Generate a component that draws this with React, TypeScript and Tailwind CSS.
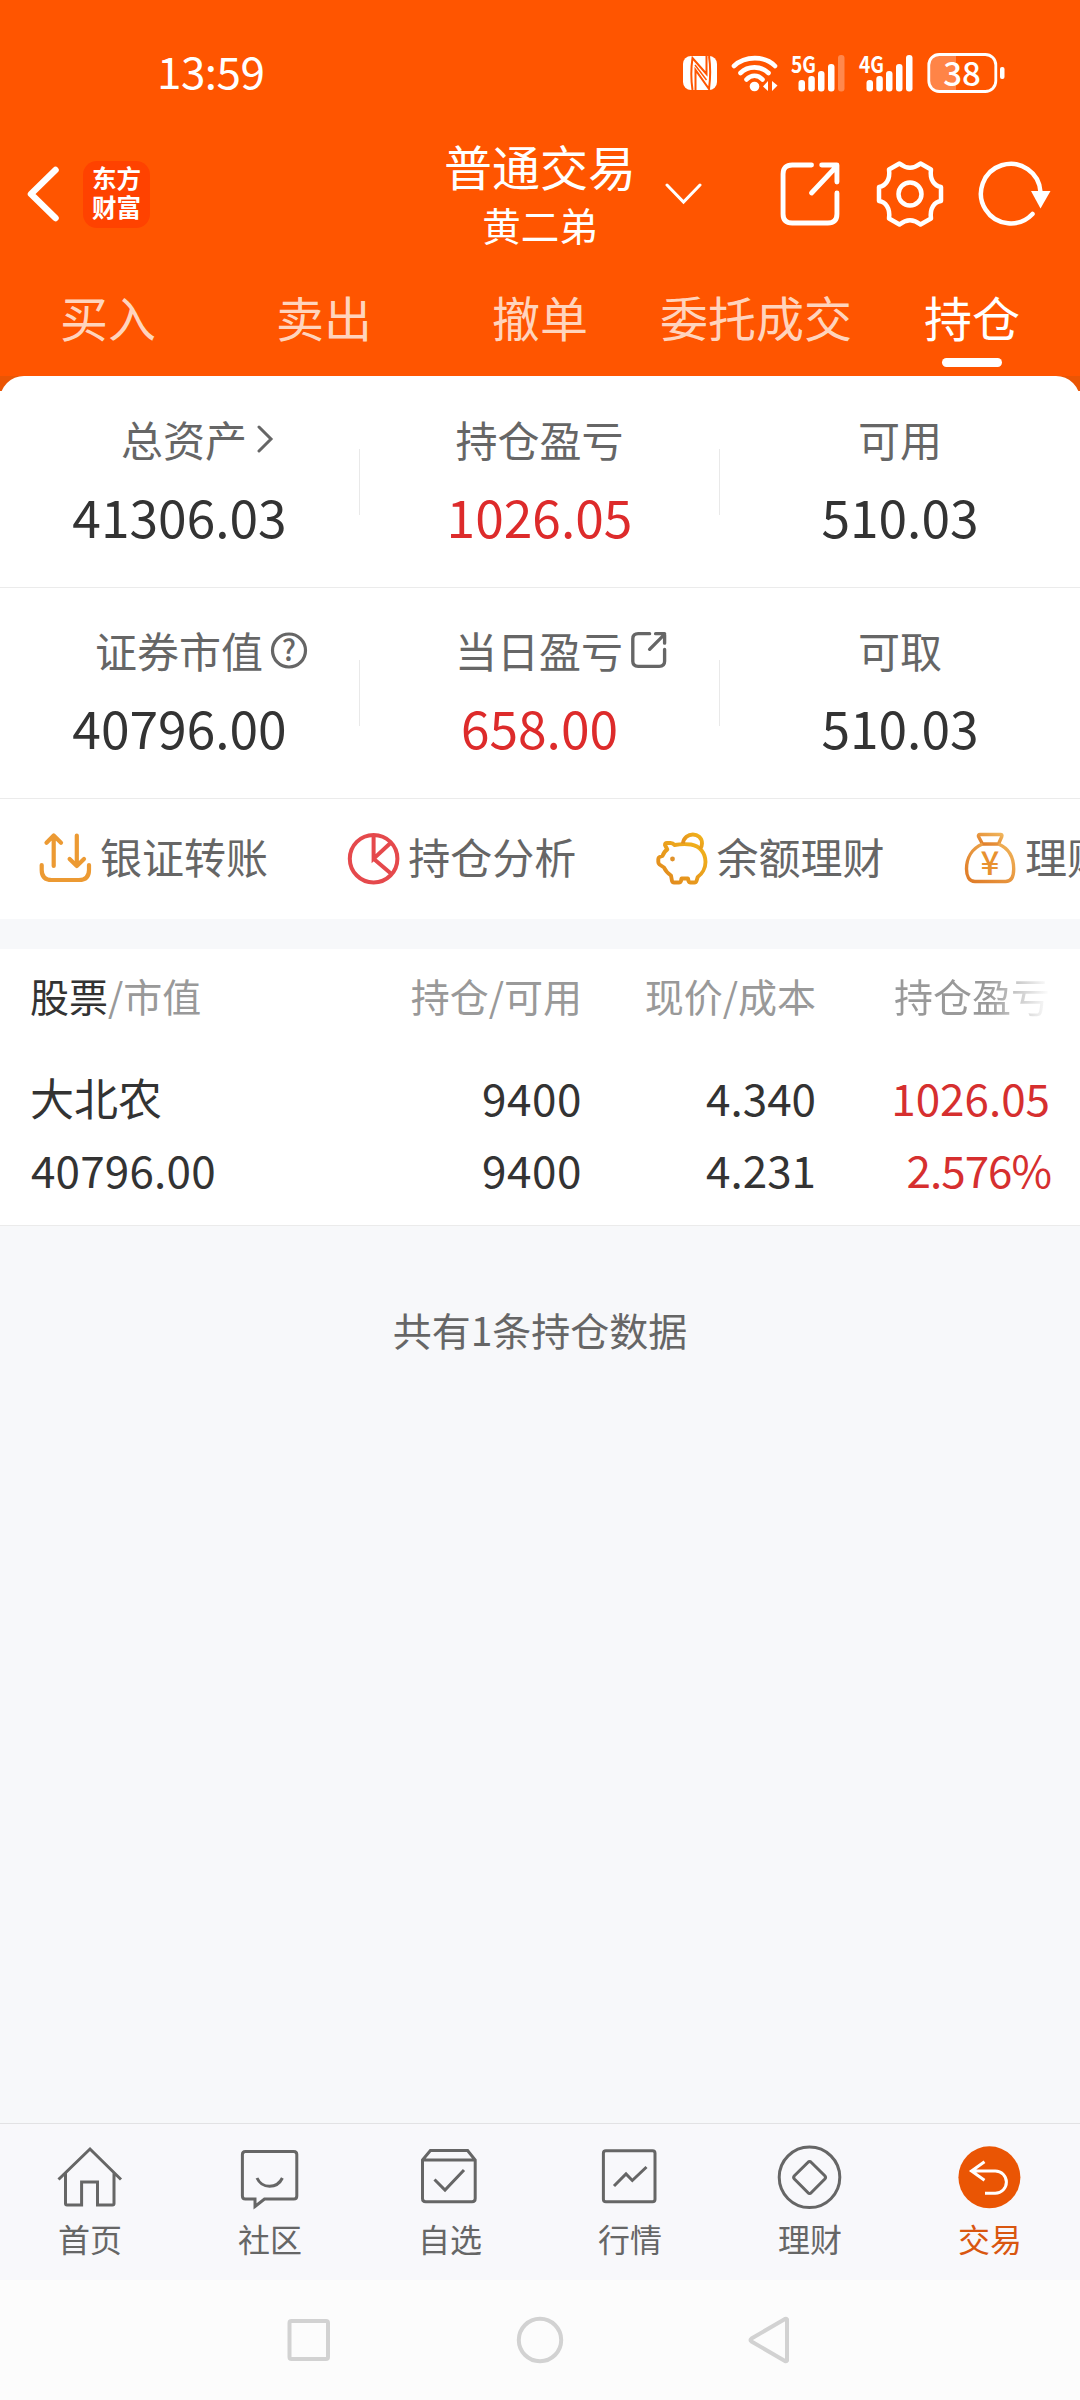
import React from "react";

const tabs = ["买入", "卖出", "撤单", "委托成交", "持仓"];

function NfcIcon() {
  return (
    <svg className="w-[34px] h-[34px] mt-[3px]" viewBox="0 0 34 34" fill="none">
      <rect width="34" height="34" rx="8" fill="#fff" />
      <g stroke="#ff5500" strokeWidth="2">
        <path d="M9.500 34C8 24 8 12 9.500 2L23.500 18V0" />
        <path d="M12.500 34V14L26 33C27.500 22 27.500 10 26 0" />
        <path d="M12 9L23.500 24" strokeWidth="1.400" />
      </g>
    </svg>
  );
}

function WifiIcon() {
  return (
    <svg className="w-[48px] h-[38px] ml-[14px] mt-[1px]" viewBox="0 0 48 38" fill="none">
      <g stroke="#fff" strokeWidth="4.6" strokeLinecap="round">
        <path d="M3 12C14 1.500 34 1.500 44 12" />
        <path d="M9.500 19C17 11.500 30 11.500 37.500 19" />
        <path d="M15.500 25.500C20 20.500 27 20.500 31.500 25.500" />
      </g>
      <circle cx="23.500" cy="32.500" r="4.800" fill="#fff" />
      <path d="M37 27v10l-5-4.500zM41 27v10l5.500-5.500z" fill="#fff" />
    </svg>
  );
}

function Signal({ label, weak }: { label: string; weak?: boolean }) {
  return (
    <svg className="w-[56px] h-[40px] overflow-visible" viewBox="0 0 56 40">
      <text
        x="0"
        y="20"
        fill="#fff"
        fontSize="23"
        fontWeight="700"
        textLength="25"
        lengthAdjust="spacingAndGlyphs"
      >
        {label}
      </text>
      <g fill="#fff">
        <rect x="7.500" y="27" width="6.500" height="11.500" rx="3" />
        <rect x="17.300" y="23" width="6.500" height="15.500" rx="3" />
        <rect x="27" y="18" width="6.500" height="20.500" rx="3" />
        <rect x="37" y="11" width="6.500" height="27.500" rx="3" />
        <rect x="47" y="2" width="6.500" height="36.500" rx="3" opacity={weak ? 0.3 : 1} />
      </g>
    </svg>
  );
}

function Battery() {
  return (
    <svg className="w-[80px] h-[40px] overflow-visible" viewBox="0 0 80 40" fill="none">
      <path d="M12 1.500H29V38.500H12Q2 38.500 2 28V12Q2 1.500 12 1.500Z" fill="#fff" opacity="0.28" />
      <rect x="1.800" y="1.500" width="67" height="37" rx="10.500" stroke="#fff" strokeWidth="2.800" />
      <rect x="73" y="14" width="4.500" height="12" rx="2" fill="#fff" />
      <text x="35" y="32.500" textAnchor="middle" fill="#fff" fontSize="33" fontWeight="500">
        38
      </text>
    </svg>
  );
}

function ShareIcon({ className, weight }: { className: string; weight: number }) {
  return (
    <svg
      className={className}
      viewBox="0 0 60 64"
      preserveAspectRatio="none"
      fill="none"
      stroke="currentColor"
      strokeWidth={weight}
      strokeLinecap="round"
      strokeLinejoin="round"
    >
      <path d="M31 3H12Q3 3 3 12V52Q3 61 12 61H47Q56 61 56 52V31" />
      <path d="M41 3H56V20M56 4L31 31" />
    </svg>
  );
}

function Header() {
  return (
    <header className="bg-[#ff5500] text-white">
      <div className="flex items-start h-[110px] pt-[53px]">
        <div className="w-[683px] pl-[157px] text-[44px] leading-[34px] tracking-[-0.5px]">13:59</div>
        <NfcIcon />
        <WifiIcon />
        <div className="ml-[12px]">
          <Signal label="5G" weak />
        </div>
        <div className="ml-[12px]">
          <Signal label="4G" />
        </div>
        <div className="ml-[12px]">
          <Battery />
        </div>
      </div>

      <div className="grid grid-cols-[444px_192px_444px] items-center h-[168px]">
        <div className="flex items-center pl-[24px]">
          <svg className="w-[38px] h-[60px]" viewBox="0 0 38 60" fill="none" stroke="#fff" strokeWidth="6.500" strokeLinecap="round" strokeLinejoin="round">
            <path d="M31.500 6L7 30L31.500 54" />
          </svg>
          <div className="ml-[21px] w-[67px] h-[67px] rounded-[14px] bg-[#ff4200] flex items-center justify-center pb-[4px]">
            <span className="w-[49px] text-[24.5px] leading-[29px] font-bold break-all">东方财富</span>
          </div>
        </div>
        <div className="flex flex-col items-center whitespace-nowrap">
          <span className="text-[48px] leading-[60px]">普通交易</span>
          <span className="text-[38.5px] leading-[58px]">黄二弟</span>
        </div>
        <div className="flex items-center pl-[29px]">
          <svg className="w-[37px] h-[22px]" viewBox="0 0 37 22" fill="none" stroke="#fff" strokeWidth="3" strokeLinecap="round">
            <path d="M2 2L18.500 19L35 2" />
          </svg>
          <ShareIcon className="w-[61px] h-[64px] ml-[78px]" weight={4.8} />
          <svg className="w-[68px] h-[68px] ml-[35px]" viewBox="-34 -34 68 68" fill="none" stroke="#fff" strokeWidth="4.500" strokeLinejoin="round">
            <path d="M-10.500 -30.500Q0 -22 10.500 -30.500L21 -24.500C19.500 -14 24.500 -8 31 -7V7C24.500 8 19.500 14 21 24.500L10.500 30.500Q0 22 -10.500 30.500L-21 24.500C-19.500 14 -24.500 8 -31 7V-7C-24.500 -8 -19.500 -14 -21 -24.500Z" />
            <circle r="11.500" />
          </svg>
          <svg className="w-[74px] h-[68px] ml-[33px]" viewBox="0 0 74 68" fill="none">
            <path d="M55.500 54A29.800 29.800 0 1 1 63.500 32" stroke="#fff" strokeWidth="4.500" strokeLinecap="round" />
            <path d="M54 31H73.500L63.500 48.500Z" fill="#fff" />
          </svg>
        </div>
      </div>

      <nav className="grid grid-cols-5 h-[98px] pt-[8px]">
        {tabs.map((tab) => (
          <div key={tab} className="flex flex-col items-center">
            <span
              className={
                tab === "持仓"
                  ? "text-[48px] leading-[60px] text-white"
                  : "text-[48px] leading-[60px] text-[#ffd4bd]"
              }
            >
              {tab}
            </span>
            {tab === "持仓" && <div className="mt-[12px] w-[60px] h-[9px] rounded-full bg-white" />}
          </div>
        ))}
      </nav>
    </header>
  );
}

interface StatProps {
  label: string;
  value: string;
  red?: boolean;
  last?: boolean;
  children?: React.ReactNode;
}

function Stat({ label, value, red, last, children }: StatProps) {
  return (
    <div className="flex">
      <div className="flex-1 flex flex-col items-center">
        <div className="flex items-center justify-center h-[56px] text-[42px] leading-[56px] text-[#666]">
          {label}
          {children}
        </div>
        <div className={`mt-[17px] h-[64px] text-[51.5px] leading-[64px] ${red ? "text-[#dd2b2b]" : "text-[#333]"}`}>
          {value}
        </div>
      </div>
      {!last && <div className="w-px h-[66px] mt-[38px] bg-[#e9e9e9]" />}
    </div>
  );
}

function Summary() {
  return (
    <section className="bg-[linear-gradient(#ea5504_15px,#fff_15px)]">
      <div className="bg-white rounded-t-[24px]">
        <div className="grid grid-cols-3 h-[212px] pt-[35px] border-b border-[#ebebeb]">
          <Stat label="总资产" value="41306.03">
            <svg className="w-[17px] h-[28px] ml-[10px] mr-[-36px]" viewBox="0 0 17 28" fill="none" stroke="#666" strokeWidth="3" strokeLinecap="round">
              <path d="M2 2L14 14L2 26" />
            </svg>
          </Stat>
          <Stat label="持仓盈亏" value="1026.05" red />
          <Stat label="可用" value="510.03" last />
        </div>
        <div className="grid grid-cols-3 h-[211px] pt-[34px] border-b border-[#ebebeb]">
          <Stat label="证券市值" value="40796.00">
            <svg className="w-[36px] h-[36px] ml-[8px] mr-[-43px] overflow-visible" viewBox="0 0 36 36" fill="none">
              <circle cx="18" cy="18.500" r="16.500" stroke="#666" strokeWidth="3.200" />
              <text x="18" y="29" textAnchor="middle" fontSize="29" fontWeight="500" fill="#666">
                ?
              </text>
            </svg>
          </Stat>
          <Stat label="当日盈亏" value="658.00" red>
            <ShareIcon className="w-[36px] h-[36px] ml-[8px] mr-[-43px]" weight={5.6} />
          </Stat>
          <Stat label="可取" value="510.03" last />
        </div>
      </div>
    </section>
  );
}

function TransferIcon() {
  return (
    <svg className="w-[53px] h-[53px]" viewBox="0 0 53 53" fill="none" stroke="#ec9a33" strokeWidth="4.200" strokeLinecap="round" strokeLinejoin="round">
      <path d="M2.700 33V38Q2.700 48 12.700 48H40Q50 48 50 38V33" />
      <path d="M14.700 34V3.500M7.500 10.700L14.700 3.500L22 10.700" />
      <path d="M37.800 3.500V34M30.600 27L37.800 34L45 27" />
    </svg>
  );
}

function PieIcon() {
  return (
    <svg className="w-[53px] h-[53px]" viewBox="0 0 53 53" fill="none" stroke="#e5494c" strokeWidth="4">
      <circle cx="26.600" cy="26.700" r="23.800" />
      <path d="M26.600 2.500V26.700L43.500 11M26.600 26.700L44.500 42" />
    </svg>
  );
}

function PiggyIcon() {
  return (
    <svg className="w-[53px] h-[53px]" viewBox="0 0 53 53" fill="none" strokeWidth="3.900" strokeLinejoin="round" stroke="url(#piggy)">
      <defs>
        <linearGradient id="piggy" x1="0" y1="1" x2="1" y2="0">
          <stop offset="0" stopColor="#e0861f" />
          <stop offset="1" stopColor="#f2b51b" />
        </linearGradient>
      </defs>
      <path d="M9 13Q9 11 11 11H14.500Q17 11 18.500 13Q27 11.500 35 12.500C44 14 49.500 21 49.500 30C49.500 36 46 42 41.700 45L40.500 49Q40 50.500 38.500 50.500H34.500Q33 50.500 32.500 49L32 46.500H25.500L25 49Q24.500 50.500 23 50.500H18Q16.500 50.500 16 49L15 43.500Q10 40 8 35.500L3.500 32.500Q2.300 31.500 2.300 30V27Q2.300 25.500 3.500 25L6.500 24Q8 19.500 11.300 17.500Z" />
      <path d="M27 11.500C28 -0.500 46 -0.500 46 11.500Q46 14.500 44 17" />
      <circle cx="16.500" cy="27" r="2.400" fill="#e0912a" stroke="none" />
    </svg>
  );
}

function BagIcon() {
  return (
    <svg className="w-[53px] h-[53px]" viewBox="0 0 53 53" fill="none" strokeWidth="3.400" strokeLinejoin="round" stroke="url(#bag)">
      <defs>
        <linearGradient id="bag" x1="0" y1="1" x2="1" y2="0">
          <stop offset="0" stopColor="#df7a26" />
          <stop offset="1" stopColor="#f0b45a" />
        </linearGradient>
      </defs>
      <path d="M16 2.500H36.500Q38.500 2.500 37.800 4.500L34.500 12H18.500L14.500 4.500Q14 2.500 16 2.500Z" />
      <path d="M18.500 12C8 16.500 2.500 26 2.500 37C2.500 44 5 49.500 11 49.500H41.500C47.500 49.500 49.700 44 49.700 37C49.700 26 45 16.500 34.500 12" />
      <text x="26" y="43" textAnchor="middle" fontSize="33" fontWeight="500" fill="#e8912f" stroke="none">
        ¥
      </text>
    </svg>
  );
}

const shortcuts = [
  { text: "银证转账", icon: <TransferIcon /> },
  { text: "持仓分析", icon: <PieIcon /> },
  { text: "余额理财", icon: <PiggyIcon /> },
  { text: "理财", icon: <BagIcon /> },
];

function Shortcuts() {
  return (
    <section className="flex items-center h-[120px] pl-[39px] pb-[2px] bg-white overflow-hidden">
      {shortcuts.map((s) => (
        <div key={s.text} className="flex items-center shrink-0 w-[308.3px]">
          {s.icon}
          <span className="ml-[8px] mt-[-4px] text-[42px] leading-[56px] text-[#666] whitespace-nowrap">{s.text}</span>
        </div>
      ))}
    </section>
  );
}

function Holdings() {
  return (
    <section className="bg-white border-b border-[#ebebeb]">
      <div className="grid grid-cols-[318px_234px_234px_234px] px-[30px] h-[92px] text-[39px] leading-[92px] text-[#999] text-right">
        <div className="text-left">
          <span className="text-[#333]">股票</span>/市值
        </div>
        <div>持仓/可用</div>
        <div>现价/成本</div>
        <div>
          <span className="bg-[linear-gradient(90deg,#999_60%,#fff_100%)] bg-clip-text text-transparent">持仓盈亏</span>
        </div>
      </div>
      <div className="grid grid-cols-[318px_234px_234px_234px] gap-y-[16px] px-[30px] pt-[28px] pb-[28px] text-[44px] leading-[56px] text-[#333] text-right">
        <div className="text-left">大北农</div>
        <div className="tracking-[0.6px]">9400</div>
        <div>4.340</div>
        <div className="text-[#d62f2f]">1026.05</div>
        <div className="text-left tracking-[0.2px] pl-[1px]">40796.00</div>
        <div className="tracking-[0.6px]">9400</div>
        <div>4.231</div>
        <div className="text-[#d62f2f] tracking-[-1px] mr-[-1px]">2.576%</div>
      </div>
    </section>
  );
}

const menu = [
  {
    text: "首页",
    icon: <path d="M1.500 35.500L33 5L64 35.500M8.500 29V59.500Q8.500 61 10 61H24.600V38H40.500V61H55.500Q57 61 57 59.500V29" />,
  },
  {
    text: "社区",
    icon: (
      <>
        <path d="M8.400 7.500H56.800Q59.800 7.500 59.800 10.500V52Q59.800 55 56.800 55H27.500L18 62.500V55H8.400Q5.400 55 5.400 52V10.500Q5.400 7.500 8.400 7.500Z" />
        <path d="M20 34C25 45 40 45 45.400 34" />
      </>
    ),
  },
  {
    text: "自选",
    icon: (
      <>
        <path d="M5.500 16L13.400 6.500H50.600L58.200 16V54.500Q58.200 57.700 55 57.700H8.700Q5.500 57.700 5.500 54.500ZM5.500 16H58.200" />
        <path d="M17.500 35.500L28 46L47 26" />
      </>
    ),
  },
  {
    text: "行情",
    icon: (
      <>
        <rect x="6.400" y="6.700" width="51.600" height="51" rx="2.500" />
        <path d="M17 42L29 30L35.300 36.500L49.500 23" />
      </>
    ),
  },
  {
    text: "理财",
    icon: (
      <>
        <circle cx="32.500" cy="33.300" r="30.300" />
        <path d="M30.800 18.500Q32.600 16.500 34.400 18.500L47.800 31.700Q49.300 33.300 47.800 35L34.400 48.500Q32.600 50.500 30.800 48.500L17.400 35Q15.900 33.300 17.400 31.700Z" />
      </>
    ),
  },
  {
    text: "交易",
    icon: (
      <>
        <circle cx="32.400" cy="33.300" r="31" fill="#ea5504" stroke="none" />
        <path stroke="#fff" d="M27.500 17.700L14.500 27L27.500 36.300M14.500 27H38.300A11.100 11.100 0 0 1 38.300 49.200H28" />
      </>
    ),
  },
];

function BottomMenu() {
  return (
    <nav className="grid grid-cols-6 h-[157px] pt-[20px] border-t border-[#e2e2e4] bg-[#f8f8fb]">
      {menu.map((m) => (
        <div key={m.text} className="flex flex-col items-center">
          <svg className="w-[66px] h-[66px]" viewBox="0 0 66 66" fill="none" stroke="#666" strokeWidth="3">
            {m.icon}
          </svg>
          <span
            className={
              m.text === "交易"
                ? "mt-[8px] text-[32px] leading-[40px] text-[#d9560f]"
                : "mt-[8px] text-[32px] leading-[40px] text-[#666]"
            }
          >
            {m.text}
          </span>
        </div>
      ))}
    </nav>
  );
}

function SystemNav() {
  return (
    <div className="flex items-center justify-center gap-[183px] h-[120px] bg-[#fcfcfc]">
      <svg className="w-[48px] h-[48px]" viewBox="0 0 48 48" fill="none" stroke="#d2d2d2" strokeWidth="4">
        <rect x="4.500" y="5" width="38.500" height="38" rx="2" />
      </svg>
      <svg className="w-[48px] h-[48px]" viewBox="0 0 48 48" fill="none" stroke="#d2d2d2" strokeWidth="4">
        <circle cx="24" cy="24" r="21.200" />
      </svg>
      <svg className="w-[48px] h-[48px]" viewBox="0 0 48 48" fill="none" stroke="#d2d2d2" strokeWidth="4" strokeLinejoin="round">
        <path d="M40 3.500V44.500Q39.500 45.500 38 45L4.500 25.500Q2.500 24 4.500 22.500L38 3Q39.500 2.500 40 3.500Z" />
      </svg>
    </div>
  );
}

export default function App() {
  return (
    <div className="flex flex-col w-[1080px] h-[2400px] overflow-hidden bg-[#f7f8fa] font-['Noto_Sans_CJK_SC',sans-serif]">
      <Header />
      <Summary />
      <Shortcuts />
      <div className="h-[30px] shrink-0" />
      <Holdings />
      <p className="mt-[75px] text-center text-[39px] leading-[56px] text-[#666]">共有1条持仓数据</p>
      <div className="flex-1" />
      <BottomMenu />
      <SystemNav />
    </div>
  );
}
